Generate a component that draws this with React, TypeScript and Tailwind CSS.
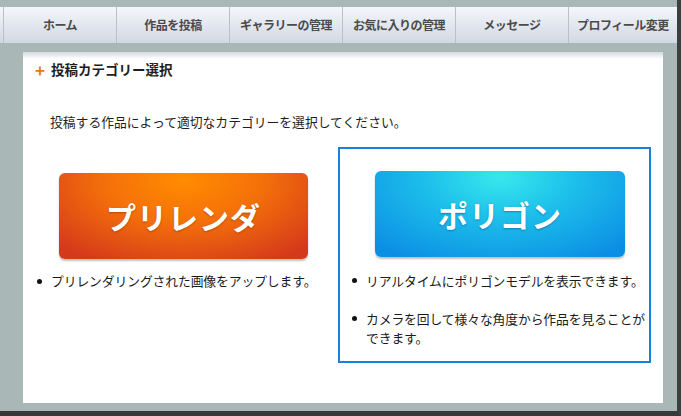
import React from "react";

const navItems = ["ホーム", "作品を投稿", "ギャラリーの管理", "お気に入りの管理", "メッセージ", "プロフィール変更"];

function Bullet({ children }: { children: React.ReactNode }) {
  return (
    <li className="flex items-start">
      <span className="mt-[7px] mr-[9px] h-[5px] w-[5px] shrink-0 rounded-full bg-[#111]" />
      <span>{children}</span>
    </li>
  );
}

export default function App() {
  return (
    <div
      className="h-[416px] w-[681px] overflow-hidden border-r-[4px] border-b-[5px] border-r-[#3b403f] border-b-[#353a39] bg-[#a9b8b6] text-[#1a1a1a]"
      style={{ fontFamily: '"Noto Sans CJK JP", "Noto Sans", sans-serif' }}
    >
      {/* top navigation */}
      <nav className="mt-[7px] flex h-[36px] bg-gradient-to-b from-[#f4f6fc] to-[#d2d8e2]">
        <div className="w-[4px] border-r border-[#b9c0c9]" />
        {navItems.map((label, i) => (
          <div
            key={label}
            className={
              "flex items-center justify-center text-[12px] font-bold tracking-[-0.5px] text-[#4a4a4a] " +
              (i < navItems.length - 1 ? "w-[113px] border-r border-[#b9c0c9]" : "flex-1")
            }
          >
            {label}
          </div>
        ))}
      </nav>

      {/* main panel */}
      <section className="mt-[9px] ml-[23px] flex h-[351px] w-[640px] flex-col bg-white">
        <div className="h-[7px] bg-gradient-to-b from-[#d3d9e1] to-white" />
        <h2 className="mt-[1px] flex items-center pl-[12px] text-[13.5px] font-bold leading-[18px] text-[#1e1e1e]">
          <span className="mr-[6px] text-[17px] font-bold leading-none text-[#e87a12]">+</span>
          投稿カテゴリー選択
        </h2>
        <p className="mt-[35px] pl-[27px] text-[12.8px] leading-[18px] text-[#1e1e1e]">
          投稿する作品によって適切なカテゴリーを選択してください。
        </p>

        <div className="mt-[16px] flex items-start">
          {/* pre-rendered category */}
          <div className="ml-[14px] w-[290px] pt-[26px]">
            <button className="ml-[22px] flex h-[86px] w-[249px] items-center justify-center rounded-[6px] bg-[radial-gradient(ellipse_70%_110%_at_50%_8%,#ff8c00_0%,#f4700a_45%,#d4391b_100%)] text-[30px] font-bold tracking-[1px] text-white shadow-[0_2px_2px_rgba(0,0,0,0.25)] [text-shadow:0_1px_2px_rgba(120,30,0,0.45)]">
              プリレンダ
            </button>
            <ul className="mt-[13px] text-[12.8px] leading-[18px] tracking-[-0.1px]">
              <Bullet>プリレンダリングされた画像をアップします。</Bullet>
            </ul>
          </div>

          {/* polygon category (selected) */}
          <div className="ml-[11px] h-[216px] w-[313px] border-2 border-[#1b7fdb] pt-[22px]">
            <button className="ml-[35px] flex h-[86px] w-[250px] items-center justify-center rounded-[6px] bg-[radial-gradient(ellipse_70%_110%_at_50%_8%,#36e8ed_0%,#1cbdea_45%,#0b8fe4_100%)] text-[30px] font-bold tracking-[1px] text-white shadow-[0_2px_2px_rgba(0,0,0,0.25)] [text-shadow:0_1px_2px_rgba(0,60,120,0.45)]">
              ポリゴン
            </button>
            <ul className="mt-[14px] ml-[12px] flex flex-col gap-[19px] text-[12.8px] leading-[19px] tracking-[-0.1px]">
              <Bullet>リアルタイムにポリゴンモデルを表示できます。</Bullet>
              <Bullet>
                カメラを回して様々な角度から作品を見ることが
                <br />
                できます。
              </Bullet>
            </ul>
          </div>
        </div>
      </section>
    </div>
  );
}
